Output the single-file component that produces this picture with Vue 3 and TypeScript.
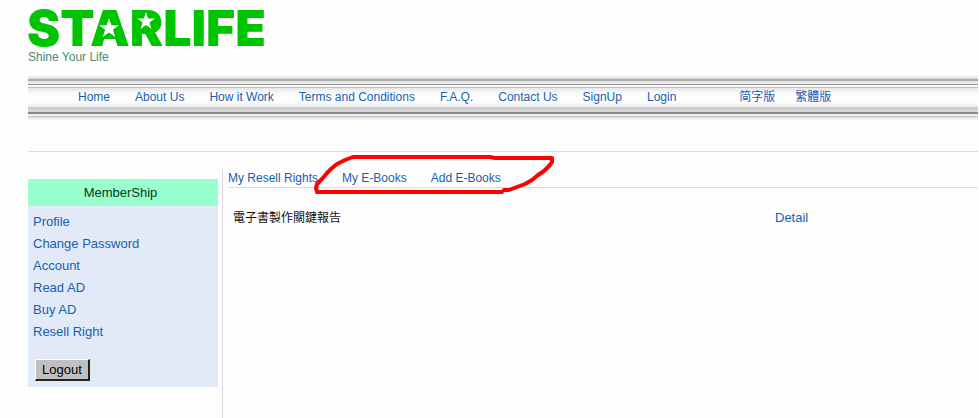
<script setup lang="ts">
interface LinkItem {
  label: string
  href: string
}

const mainLinks: LinkItem[] = [
  { label: 'Home', href: '#home' },
  { label: 'About Us', href: '#about' },
  { label: 'How it Work', href: '#how' },
  { label: 'Terms and Conditions', href: '#terms' },
  { label: 'F.A.Q.', href: '#faq' },
  { label: 'Contact Us', href: '#contact' },
  { label: 'SignUp', href: '#signup' },
  { label: 'Login', href: '#login' },
]

const memberLinks: LinkItem[] = [
  { label: 'Profile', href: '#profile' },
  { label: 'Change Password', href: '#password' },
  { label: 'Account', href: '#account' },
  { label: 'Read AD', href: '#read-ad' },
  { label: 'Buy AD', href: '#buy-ad' },
  { label: 'Resell Right', href: '#resell' },
]

const tabs: LinkItem[] = [
  { label: 'My Resell Rights', href: '#my-resell' },
  { label: 'My E-Books', href: '#my-ebooks' },
  { label: 'Add E-Books', href: '#add-ebooks' },
]
</script>

<template>
  <div class="page">
    <header>
      <svg class="logo" width="240" height="50" viewBox="0 0 240 50" role="img" aria-label="STARLIFE">
        <text class="logo-text" x="-1" y="46">STARLIFE</text>
        <polygon class="patch" points="77,14 85,14 92,39 70,39" />
        <rect class="patch" x="110" y="13" width="18" height="18" />
        <polygon class="star" points="81,18 83.4,25.2 91,25.2 84.9,29.7 87.2,37 81,32.5 74.8,37 77.1,29.7 71,25.2 78.6,25.2" />
        <polygon class="star" points="118,12 120.1,18.4 127,18.4 121.4,22.5 123.6,29 118,25 112.4,29 114.6,22.5 109,18.4 115.9,18.4" />
      </svg>
      <p class="tagline">Shine Your Life</p>
    </header>

    <nav class="main-nav">
      <a v-for="item in mainLinks" :key="item.label" :href="item.href">{{ item.label }}</a>
      <span class="languages">
        <a href="#zh-cn" lang="zh-Hans">简字版</a>
        <a href="#zh-tw" lang="zh-Hant">繁體版</a>
      </span>
    </nav>

    <div class="columns">
      <aside>
        <div class="member-box">
          <h2>MemberShip</h2>
          <ul>
            <li v-for="item in memberLinks" :key="item.label">
              <a :href="item.href">{{ item.label }}</a>
            </li>
          </ul>
          <button type="button">Logout</button>
        </div>
      </aside>

      <main>
        <nav class="tabs">
          <a v-for="item in tabs" :key="item.label" :href="item.href">{{ item.label }}</a>
          <svg class="marker" width="246" height="44" viewBox="0 0 246 44" aria-hidden="true">
            <path d="M190 38L5 38L4 34L5 30L10 25L15 19L20 14L25 10L33 6L41 3L178 3L183 4L240 4L240 8L237 12L232 17L226 21L220 26L213 30L205 33L197 36L192 36" />
          </svg>
        </nav>
        <div class="book">
          <span class="title" lang="zh-Hant">電子書製作關鍵報告</span>
          <a href="#detail">Detail</a>
        </div>
      </main>
    </div>
  </div>
</template>

<style>
body {
  margin: 0;
  background: #fefefe;
}
</style>

<style scoped>
.page {
  display: flex;
  flex-direction: column;
  min-height: 100vh;
  box-sizing: border-box;
  padding: 0 1px 0 28px;
  font: 13px/16px "Liberation Sans", "Noto Sans CJK TC", sans-serif;
  color: #111;
}

a {
  color: #1660ad;
  text-decoration: none;
  white-space: nowrap;
}

header {
  height: 75px;
}

.logo {
  display: block;
  overflow: visible;
}

.logo-text {
  font: 900 50px Inter, sans-serif;
  fill: #00c400;
}

.patch {
  fill: #00c400;
}

.star {
  fill: #fefefe;
}

.tagline {
  margin: 0;
  font-size: 12px;
  line-height: 14px;
  color: #468c74;
}

.main-nav {
  display: flex;
  align-items: center;
  gap: 25px;
  height: 46px;
  box-sizing: border-box;
  padding: 0 0 2px 50px;
  font-size: 12px;
  background: linear-gradient(
    #fefefe 0, #d8d8d8 4px, #a9a9a9 4px, #a9a9a9 6px, #e3e3e3 6px, #ededed 9px,
    #969696 9px, #969696 10px, #fafafa 10px, #fafafa 12px, #bcbcbc 12px, #bcbcbc 13px,
    #e6e6e6 13px, #fefefe 19px, #fefefe 27px, #ececec 32px, #cfcfcf 32px, #cbcbcb 35px,
    #dedede 35px, #d2d2d2 37px, #858585 37px, #8f8f8f 39px, #d6d6d6 39px, #fafafa 40px,
    #fafafa 41px, #b8b8b8 41px, #c4c4c4 42px, #e0e0e0 42px, #fefefe 46px
  );
}

.languages {
  display: flex;
  gap: 20px;
  margin-left: 38px;
}

.columns {
  display: flex;
  flex: 1;
  margin-top: 30px;
  padding-top: 17px;
  border-top: 1px solid #dcdcdc;
}

aside {
  width: 194px;
  flex: none;
  padding-top: 10px;
  border-right: 1px solid #d5d9df;
}

.member-box {
  width: 190px;
  height: 208px;
  background: #e3eaf7;
}

h2 {
  margin: 0;
  padding-right: 5px;
  font-size: 13px;
  font-weight: normal;
  line-height: 27px;
  text-align: center;
  color: #063c1c;
  background: #9fc;
}

ul {
  margin: 0;
  padding: 5px 5px 16px;
  list-style: none;
}

li {
  line-height: 22px;
}

button {
  display: block;
  width: 55px;
  height: 22px;
  margin-left: 7px;
  padding: 0;
  border: solid;
  border-width: 1px 2px 2px 1px;
  border-color: #fff #222 #222 #fff;
  border-radius: 0;
  background: #c0c0c0;
  font: inherit;
  color: #000;
}

main {
  flex: 1;
  padding-left: 5px;
}

.tabs {
  position: relative;
  display: flex;
  gap: 24px;
  padding: 1px 0;
  font-size: 12px;
  border-bottom: 1px solid #dcdcdc;
}

.marker {
  position: absolute;
  top: -15px;
  left: 84px;
  fill: none;
  stroke: #f00;
  stroke-width: 4px;
  stroke-linecap: round;
  stroke-linejoin: round;
}

.book {
  display: flex;
  padding: 22px 5px;
}

.title {
  width: 542px;
  font-size: 12px;
}
</style>
